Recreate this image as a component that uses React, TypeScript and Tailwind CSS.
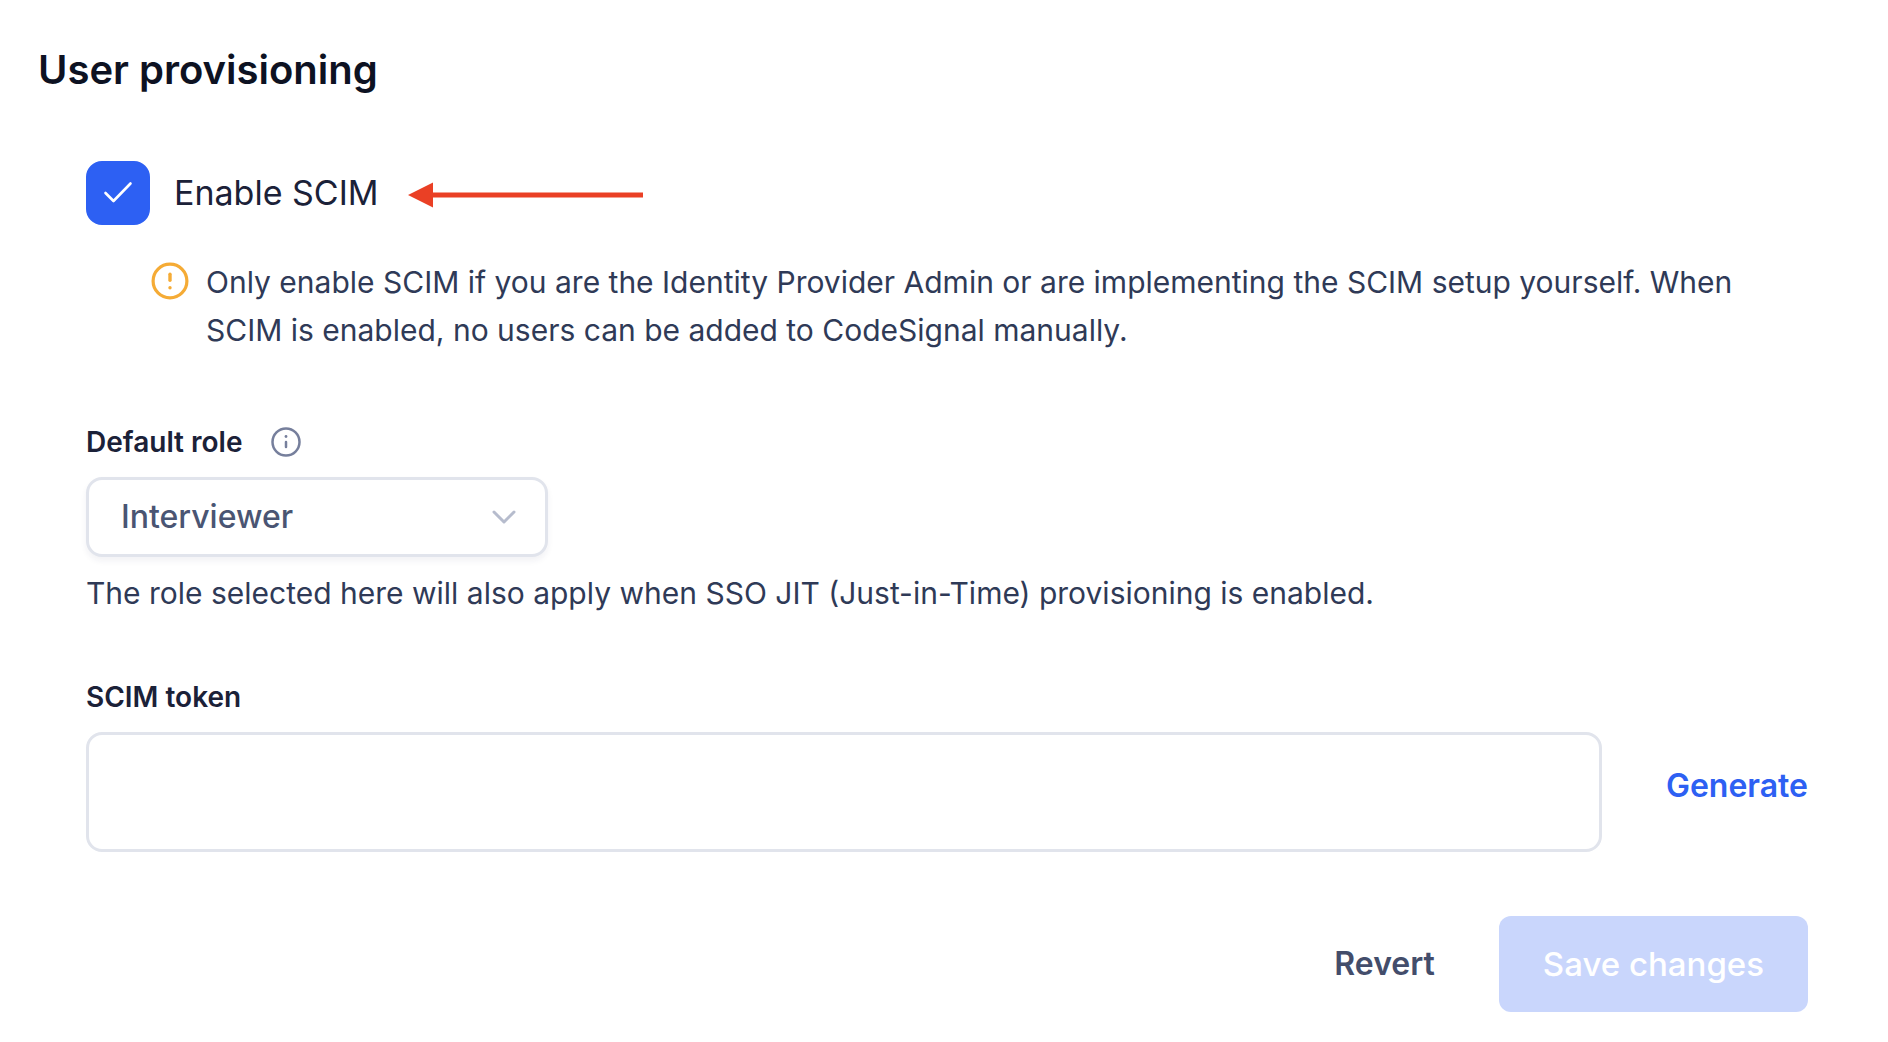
import React, { useState } from "react";

const roles = ["Interviewer", "Recruiter", "Admin"];

const CheckMark = () => (
  <svg
    viewBox="0 0 64 64"
    className="pointer-events-none absolute inset-0 size-16"
    fill="none"
    stroke="#fff"
    strokeWidth="2.6"
    strokeLinecap="round"
    strokeLinejoin="round"
    aria-hidden="true"
  >
    <path d="M19.5 32 L27.5 40 L44.5 22.500" />
  </svg>
);

const Arrow = () => (
  <svg
    viewBox="0 0 236 32"
    className="ml-7 h-8 w-[236px] shrink-0"
    fill="#ea4025"
    aria-hidden="true"
  >
    <path d="M1 18 L26 5.500 V15.500 H236 V20.500 H26 V30.500 Z" />
  </svg>
);

const WarningIcon = () => (
  <svg
    viewBox="0 0 38 38"
    className="mt-1 size-[38px] shrink-0"
    fill="none"
    stroke="#f5ab35"
    aria-hidden="true"
  >
    <circle cx="19" cy="19" r="16.900" strokeWidth="3.200" />
    <path d="M19 12.300 V18.300" strokeWidth="3.400" strokeLinecap="round" />
    <circle cx="19" cy="25.800" r="1.700" fill="#f5ab35" stroke="none" />
  </svg>
);

const InfoIcon = () => (
  <svg
    viewBox="0 0 30 30"
    className="size-[30px] shrink-0"
    fill="none"
    stroke="#767f9c"
    aria-hidden="true"
  >
    <circle cx="15" cy="15" r="13.500" strokeWidth="2.500" />
    <path d="M15 15 V20" strokeWidth="2.500" strokeLinecap="round" />
    <circle cx="15" cy="9.500" r="1.400" fill="#767f9c" stroke="none" />
  </svg>
);

const Chevron = () => (
  <svg
    viewBox="0 0 26 16"
    className="pointer-events-none absolute right-[31px] top-8 h-4 w-[26px]"
    fill="none"
    stroke="#b6bccd"
    strokeWidth="3"
    strokeLinecap="round"
    strokeLinejoin="round"
    aria-hidden="true"
  >
    <path d="M3 3 L13 13 L23 3" />
  </svg>
);

const App = () => {
  const [enabled, setEnabled] = useState(true);
  const [role, setRole] = useState("Interviewer");
  const [token, setToken] = useState("");

  return (
    <main className="min-h-screen bg-white pb-[30px] pl-[38px] pr-20 pt-10 font-['Inter','Liberation_Sans',sans-serif] text-[#2f3a57]">
      <h1 className="text-[40px] font-semibold leading-[60px] text-[#0d1222]">
        User provisioning
      </h1>

      <form
        className="mt-[61px] pl-12"
        onSubmit={(e) => e.preventDefault()}
      >
        <div className="flex items-center">
          <div className="relative size-16 shrink-0">
            <input
              id="scim"
              type="checkbox"
              checked={enabled}
              onChange={(e) => setEnabled(e.target.checked)}
              className="block size-16 appearance-none rounded-2xl border-[3px] border-[#e1e4ec] checked:border-[#2d60f3] checked:bg-[#2d60f3]"
            />
            {enabled && <CheckMark />}
          </div>
          <label
            htmlFor="scim"
            className="pl-6 text-[34px] leading-10 text-[#1b2138]"
          >
            Enable SCIM
          </label>
          <Arrow />
        </div>

        <div className="mt-[33px] flex gap-[17px] pl-[65px]">
          <WarningIcon />
          <p className="text-[30px] leading-[48px]">
            Only enable SCIM if you are the Identity Provider Admin or are
            implementing the SCIM setup yourself. When SCIM is enabled, no users
            can be added to CodeSignal manually.
          </p>
        </div>

        <div className="mt-[68px]">
          <div className="flex items-center gap-7">
            <label
              htmlFor="role"
              className="text-[28px] font-semibold leading-10 text-[#1b2138]"
            >
              Default role
            </label>
            <InfoIcon />
          </div>
          <div className="relative mt-[15px] w-[462px]">
            <select
              id="role"
              value={role}
              onChange={(e) => setRole(e.target.value)}
              className="block h-20 w-full appearance-none rounded-2xl border-[3px] border-[#e1e4ec] bg-white pl-8 pr-16 text-[32px] font-medium text-[#4a5573] shadow-[0_4px_6px_rgba(30,40,80,0.06)]"
            >
              {roles.map((item) => (
                <option key={item}>{item}</option>
              ))}
            </select>
            <Chevron />
          </div>
          <p className="mt-3 text-[30px] leading-[48px]">
            The role selected here will also apply when SSO JIT (Just-in-Time)
            provisioning is enabled.
          </p>
        </div>

        <div className="mt-[60px]">
          <label
            htmlFor="token"
            className="block text-[28px] font-semibold leading-10 text-[#1b2138]"
          >
            SCIM token
          </label>
          <div className="mt-[15px] flex items-center gap-16">
            <input
              id="token"
              type="text"
              value={token}
              onChange={(e) => setToken(e.target.value)}
              className="h-[120px] min-w-0 flex-1 rounded-2xl border-[3px] border-[#e1e4ec] px-8 text-[30px]"
            />
            <button
              type="button"
              className="pb-3 text-[32px] font-semibold leading-10 text-[#2d60f3]"
            >
              Generate
            </button>
          </div>
        </div>

        <div className="mt-16 flex items-center justify-end gap-16">
          <button
            type="button"
            className="text-[32px] font-semibold leading-10 text-[#434d6b]"
          >
            Revert
          </button>
          <button
            type="submit"
            disabled
            className="h-24 rounded-xl bg-[#c9d6fc] px-11 text-[33px] font-medium leading-10 text-white"
          >
            Save changes
          </button>
        </div>
      </form>
    </main>
  );
};

export default App;
